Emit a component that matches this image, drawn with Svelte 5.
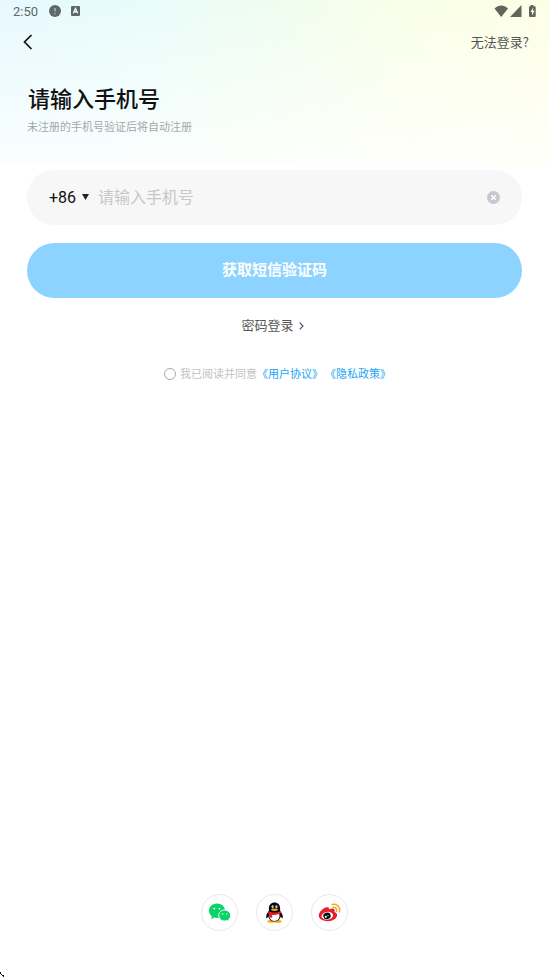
<script>
  let phone = $state('');
  let code = $state('+86');
  let agreed = $state(false);
</script>

<div class="page">
  <header class="hero">
    <div class="status">
      <span class="clock">2:50</span>
      <svg class="alert" width="12" height="12" viewBox="0 0 12 12" aria-hidden="true">
        <circle cx="6" cy="6" r="6" fill="#5f6868" />
        <path d="M6 3v3.600M6 8v1.200" stroke="#b9cccf" stroke-width="1.200" />
      </svg>
      <svg class="lang" width="9" height="10" viewBox="0 0 9 10" aria-hidden="true">
        <rect width="9" height="10" rx="1" fill="#5f6868" />
        <path d="M2.300 7.300 4.500 2.500 6.700 7.300M3.100 5.800h2.800" fill="none" stroke="#fff" stroke-width="1.200" />
      </svg>
      <svg class="system" width="42" height="13" viewBox="0 0 42 13" fill="#62665a" aria-hidden="true">
        <path d="M0.500 3.500C4.500-.6 10-.6 14 3.500L7.200 12Z" />
        <path d="M27.500 0v12H16Z" />
        <path d="M36.500 0h3v1.300h1.200q1 0 1 1V11q0 1-1 1h-4.700q-1 0-1-1V2.300q0-1 1-1h.5Z" />
        <path d="M39.300 2.500 36.500 7h1.600v3.500l2.500-4.800H39Z" fill="#fcffe8" />
      </svg>
    </div>
    <nav class="nav">
      <button class="back" aria-label="返回">
        <svg width="10" height="16" viewBox="0 0 10 16" aria-hidden="true">
          <path d="M8.500 1 1.500 8l7 7" fill="none" stroke="#111" stroke-width="1.700" />
        </svg>
      </button>
      <a class="help" href="#help">无法登录?</a>
    </nav>
    <h1>请输入手机号</h1>
    <p class="hint">未注册的手机号验证后将自动注册</p>
  </header>

  <main>
    <div class="field">
      <label class="region">
        <select bind:value={code} aria-label="国家或地区代码">
          <option>+86</option>
        </select>
        <svg width="7" height="8" viewBox="0 0 7 8" aria-hidden="true"><path d="M0 0h7L3.500 6Z" fill="#222" /></svg>
      </label>
      <input class="phone" type="tel" placeholder="请输入手机号" aria-label="手机号" bind:value={phone} />
      <button class="clear" aria-label="清除" onclick={() => (phone = '')}>
        <svg width="13" height="13" viewBox="0 0 13 13" aria-hidden="true">
          <circle cx="6.500" cy="6.500" r="6.500" fill="#c6c7d0" />
          <path d="m4.200 4.200 4.600 4.600m0-4.600L4.200 8.800" stroke="#fff" stroke-width="1.300" />
        </svg>
      </button>
    </div>

    <button class="submit">获取短信验证码</button>

    <a class="password" href="#password">
      密码登录
      <svg width="5" height="8" viewBox="0 0 5 8" aria-hidden="true">
        <path d="m.7.700 3.300 3.300L.7 7.300" fill="none" stroke="#555560" stroke-width="1.200" />
      </svg>
    </a>

    <div class="terms">
      <input id="agree" type="checkbox" bind:checked={agreed} />
      <label for="agree">我已阅读并同意</label>
      <a href="#terms">《用户协议》</a>
      <a class="privacy" href="#privacy">《隐私政策》</a>
    </div>
  </main>

  <footer>
    <button aria-label="微信登录">
      <svg width="23" height="19" viewBox="0 0 23 19" aria-hidden="true">
        <path d="M9 .5C4.500.5 1 3.500 1 7.600c0 2.400 1.100 4.300 2.800 5.600L3 16.200l3.100-1.600c1 .3 2 .4 3 .4 4.600 0 7.900-3.300 7.900-7.400S13.500.5 9 .5Z" fill="#09d567" />
        <path d="M16.700 7c-3.400 0-6 2.400-6 5.500s2.600 5.500 6 5.500c.8 0 1.500-.1 2.200-.4l2.200 1.200-.5-2.100c1.300-1 2.100-2.500 2.100-4.200 0-3.100-2.600-5.500-6-5.500Z" fill="#09d567" stroke="#fff" />
        <circle cx="6.300" cy="5.600" r=".9" fill="#fff" /><circle cx="11.500" cy="5.600" r=".9" fill="#fff" />
        <circle cx="14.700" cy="11" r=".7" fill="#fff" /><circle cx="18.700" cy="11" r=".7" fill="#fff" />
      </svg>
    </button>
    <button aria-label="QQ登录">
      <svg width="19" height="22" viewBox="0 0 19 22" aria-hidden="true">
        <ellipse cx="6.100" cy="19.400" rx="3.600" ry="1.400" fill="#f9ad08" />
        <ellipse cx="12.900" cy="19.400" rx="3.600" ry="1.400" fill="#f9ad08" />
        <path d="M9.500.5C6 .5 3.900 3 3.900 6.300v2.500C2.200 11 1 13.300 1.200 15.600c.1 1.100 1.200.5 2.100-1 .6 3 3 5 6.200 5s5.600-2 6.200-5c.9 1.500 2 2.100 2.100 1 .2-2.300-1-4.600-2.700-6.800V6.300C15.100 3 13 .5 9.500.5Z" fill="#090909" />
        <path d="M4.900 11.500h9.200c1.300 4.200-.8 7.500-4.600 7.500s-5.900-3.300-4.600-7.500Z" fill="#fff" />
        <path d="M3.600 9.200c3.500 1.700 8.300 1.700 11.800 0l.6 2c-3.300 1.600-6.300 2-8.800 1.700v2.900l-2.500-.4.200-3.200-1.900-1Z" fill="#ee1d25" />
        <ellipse cx="7.700" cy="4.800" rx="1.200" ry="1.600" fill="#fff" /><ellipse cx="11.300" cy="4.800" rx="1.200" ry="1.600" fill="#fff" />
        <circle cx="8.100" cy="4.900" r=".6" /><circle cx="10.900" cy="4.900" r=".6" />
        <ellipse cx="9.500" cy="7.800" rx="3.400" ry="1.100" fill="#f9ad08" />
      </svg>
    </button>
    <button aria-label="微博登录">
      <svg width="23" height="19" viewBox="0 0 23 19" aria-hidden="true">
        <path d="M8.800 4.200C6 4.400.8 8.700.8 12.500c0 3.600 4.400 5.700 8.800 5.700 5.700 0 9.500-3.200 9.500-6 0-1.700-1.400-2.700-2.700-3.100.7-1.800.3-2.900-.9-3.400-1.200-.5-2.900 0-4.500.7.5-1.600-.2-2.400-2.200-2.200Z" fill="#e61e27" />
        <ellipse cx="9.300" cy="12.800" rx="5.800" ry="3.900" transform="rotate(-8 9.300 12.800)" fill="#fff" />
        <ellipse cx="9" cy="12.900" rx="3.700" ry="3.200" transform="rotate(-18 9 12.900)" fill="#090909" />
        <circle cx="7.800" cy="13.800" r="1.100" fill="#fff" /><circle cx="10" cy="12.500" r=".6" fill="#fff" />
        <path d="M14.200 1.500c4.600-1.100 8.400 2.600 7.200 7.300M14.800 4.500c2.600-.6 4.400 1.200 3.700 3.700" fill="none" stroke="#f6a42b" stroke-width="1.500" stroke-linecap="round" />
      </svg>
    </button>
  </footer>

  <svg class="corner" width="4" height="5" viewBox="0 0 4 5" aria-hidden="true">
    <path d="M0 0h1v2H0ZM1 2h1v1H1ZM2 3h2v2H3V4H2Z" fill="#111" />
  </svg>
</div>

<style>
  .page {
    position: relative;
    box-sizing: border-box;
    min-height: 100vh;
    display: flex;
    flex-direction: column;
    background: #fff;
    color: #111;
    font-family: Roboto, "Noto Sans CJK SC", sans-serif;
  }

  button,
  input,
  select {
    margin: 0;
    padding: 0;
    border: 0;
    background: none;
    color: inherit;
    font: inherit;
    appearance: none;
    outline: none;
  }

  button {
    display: flex;
    align-items: center;
    justify-content: center;
    cursor: pointer;
  }

  a {
    color: inherit;
    text-decoration: none;
  }

  svg {
    display: block;
    flex: none;
  }

  .hero {
    box-sizing: border-box;
    padding-bottom: 29px;
    background:
      linear-gradient(to bottom, rgba(255, 255, 255, 0) 0%, rgba(255, 255, 255, 0.8) 100%),
      linear-gradient(100deg, #e6f9ff 0%, #e8fcfa 25%, #effdf0 48%, #f9ffe8 70%, #feffe5 100%);
  }

  .status {
    display: flex;
    align-items: center;
    height: 22px;
    padding: 0 13px;
  }

  .clock {
    padding-top: 2px;
    color: #5f6868;
    font-size: 13px;
    line-height: 20px;
  }

  .alert {
    margin-left: 11px;
  }

  .lang {
    margin-left: 10px;
  }

  .system {
    margin-left: auto;
  }

  .nav {
    display: flex;
    align-items: center;
    justify-content: space-between;
    height: 40px;
    padding: 0 20px 0 16px;
  }

  .back {
    width: 24px;
    height: 24px;
  }

  .help {
    color: #555;
    font-family: "Noto Sans CJK SC", sans-serif;
    font-size: 13px;
    line-height: 20px;
  }

  h1 {
    margin: 20px 28px 0;
    font-size: 22px;
    font-weight: 500;
    line-height: 36px;
  }

  .hint {
    margin: 1px 27px 0;
    color: #a3a8a8;
    font-size: 11px;
    line-height: 17px;
  }

  main {
    display: flex;
    flex-direction: column;
    padding: 5px 27px 0;
  }

  .field {
    display: flex;
    align-items: center;
    height: 55px;
    padding: 0 22px;
    border-radius: 28px;
    background: #f7f7f7;
    font-size: 16px;
  }

  .region {
    display: flex;
    align-items: center;
    gap: 5px;
    margin-right: 9px;
  }

  .region select {
    width: 28px;
    line-height: 24px;
  }

  .phone {
    flex: 1;
    min-width: 0;
    height: 24px;
  }

  .phone::placeholder {
    color: #c8c8c8;
    opacity: 1;
  }

  .submit {
    box-sizing: border-box;
    height: 55px;
    margin-top: 18px;
    padding-bottom: 2px;
    border-radius: 28px;
    background: #8dd3ff;
    color: #fff;
    font-size: 15px;
    font-weight: 700;
    line-height: 22px;
  }

  .password {
    display: flex;
    align-items: center;
    align-self: center;
    gap: 5px;
    margin-top: 18px;
    padding-right: 4px;
    color: #555;
    font-size: 13px;
    line-height: 20px;
  }

  .terms {
    display: flex;
    align-items: center;
    justify-content: center;
    margin-top: 29px;
    padding-left: 6px;
    color: #c2c2c2;
    font-family: "Noto Sans CJK SC", sans-serif;
    font-size: 11px;
    line-height: 17px;
  }

  .terms input {
    box-sizing: border-box;
    width: 12px;
    height: 12px;
    margin-right: 4px;
    border: 1px solid #aaa;
    border-radius: 50%;
  }

  .terms input:checked {
    border-color: #19a5f5;
    background: #19a5f5;
  }

  .terms a {
    color: #19a5f5;
  }

  .terms .privacy {
    margin-left: 2px;
  }

  footer {
    display: flex;
    justify-content: center;
    gap: 18px;
    margin-top: auto;
    padding: 40px 0 46px;
  }

  footer button {
    box-sizing: border-box;
    width: 37px;
    height: 37px;
    border: 1px solid #e8e8e8;
    border-radius: 50%;
  }

  .corner {
    position: absolute;
    bottom: 0;
    left: 0;
  }
</style>
